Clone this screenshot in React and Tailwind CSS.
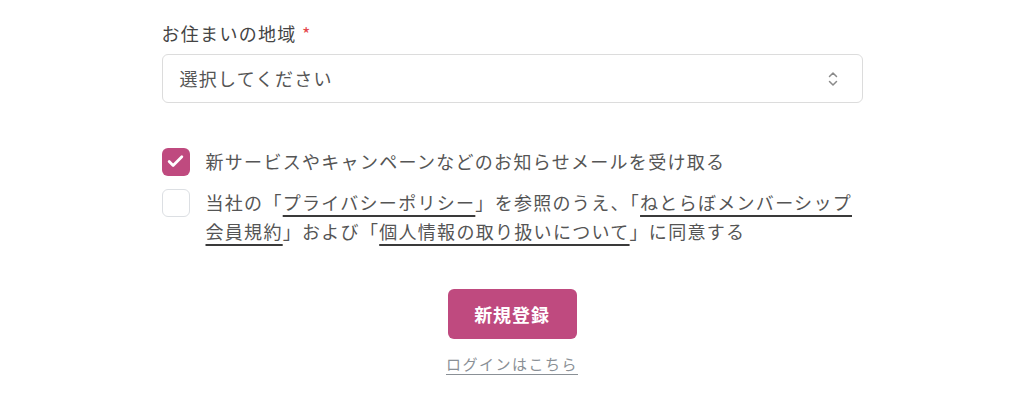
import { Check } from 'lucide-react';

const font = { fontFamily: '"Noto Sans CJK JP", "Noto Sans", sans-serif' };

const SelectArrows = () => (
  <svg width="12" height="16" viewBox="0 0 12 16" fill="none" stroke="#8a8a8a" strokeWidth="1.5" strokeLinecap="round" strokeLinejoin="round">
    <path d="M2.5 5.5 6 2l3.5 3.5" />
    <path d="M2.5 10.5 6 14l3.5-3.5" />
  </svg>
);

const Box = ({ checked }) =>
  checked ? (
    <span className="mt-[0.5px] flex h-[28px] w-[28px] shrink-0 items-center justify-center rounded-md bg-[#bf4a7f]">
      <Check size={19} strokeWidth={3.5} color="#ffffff" />
    </span>
  ) : (
    <span className="mt-[1px] h-[28px] w-[28px] shrink-0 rounded-md border border-[#dcdfe3] bg-white" />
  );

const Link = ({ children }) => (
  <span className="underline decoration-[#3a3a3a] decoration-[1.5px] underline-offset-[5px]">{children}</span>
);

export default function App() {
  return (
    <div className="h-[400px] w-full bg-white text-[#555] tracking-[1.3px]" style={font}>
      <div className="mx-auto w-[701px] pt-[19px]">
        <label className="block text-[18px] leading-[28px] text-[#444]">
          お住まいの地域 <span className="text-[#e5484d]">*</span>
        </label>
        <div className="mt-[7px] flex h-[49px] items-center justify-between rounded-md border border-[#dcdcdc] pl-[17px] pr-[23px]">
          <span className="text-[18px] text-[#555]">選択してください</span>
          <SelectArrows />
        </div>

        <div className="mt-[44px] flex flex-col gap-[12px]">
          <div className="flex items-start gap-[16px]">
            <Box checked />
            <p className="text-[18px] leading-[29px]">新サービスやキャンペーンなどのお知らせメールを受け取る</p>
          </div>
          <div className="flex items-start gap-[16px]">
            <Box />
            <p className="text-[18px] leading-[29px]">
              当社の「<Link>プライバシーポリシー</Link>」を参照のうえ、「<Link>ねとらぼメンバーシップ会員規約</Link>」および「<Link>個人情報の取り扱いについて</Link>」に同意する
            </p>
          </div>
        </div>

        <div className="mt-[43px] flex flex-col items-center">
          <button className="h-[50px] w-[129px] rounded-md bg-[#bf4a7f] text-[18px] font-bold tracking-[0.05em] text-white">
            新規登録
          </button>
          <a className="mt-[14px] text-[15px] leading-[22px] tracking-[0.1em] text-[#8a9096] underline decoration-[#8a9096] underline-offset-[4px]">
            ログインはこちら
          </a>
        </div>
      </div>
    </div>
  );
}
